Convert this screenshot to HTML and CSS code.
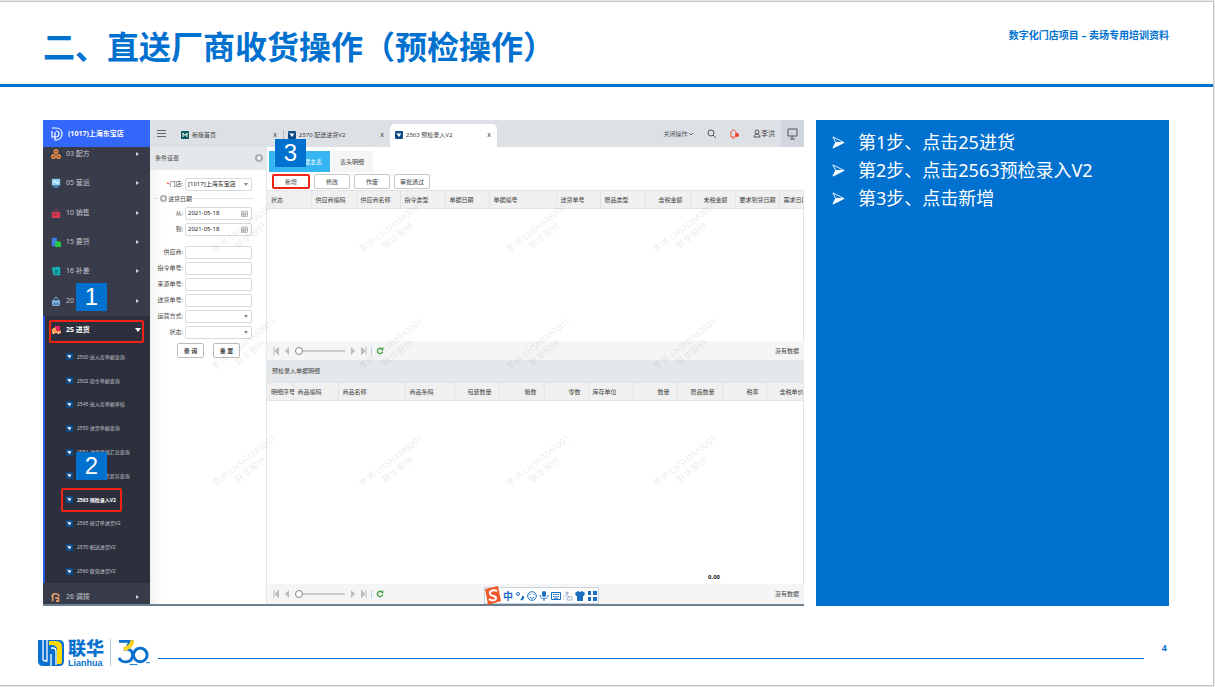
FILE: index.html
```html
<!DOCTYPE html>
<html lang="zh-CN">
<head>
  <meta charset="UTF-8">
  <meta name="viewport" content="width=device-width, initial-scale=1.0">
  <title>直送厂商收货操作</title>
  <link rel="stylesheet" href="styles.css">
</head>
<body>
  <svg class="defs" width="0" height="0">
    <symbol id="doc" viewBox="0 0 16 16"><rect width="16" height="16" rx="2" fill="#0d4a86"/><path d="M2 3l3 2h7l-1 3-3 4-3-4z" fill="#fff"/></symbol>
    <symbol id="cal" viewBox="0 0 12 12"><path d="M1 2h10v9H1zM1 5h10M4 5v6M7 5v6M1 8h10" fill="none" stroke="#888"/></symbol>
    <symbol id="refresh" viewBox="0 0 12 12"><path d="M10 7a4 4 0 1 1-1-4" fill="none" stroke="#3fa045" stroke-width="2"/><path d="M7 5h4V0z" fill="#3fa045"/></symbol>
    <symbol id="up" viewBox="0 0 12 12"><circle cx="6" cy="6" r="6" fill="#a9adb1"/><path d="M6 2l3 4-3 4-3-4z" fill="#fff"/></symbol>
    <symbol id="arrow" viewBox="0 0 14 14"><path d="M1 1l12 6H4z" fill="none" stroke="#fff"/><path d="M4 7h9L1 13z" fill="#fff" stroke="#fff"/></symbol>
  </svg>
  <div class="slide">
    <header class="slide-header">
      <h1>二、直送厂商收货操作（预检操作）</h1>
      <p>数字化门店项目 – 卖场专用培训资料</p>
    </header>

    <main class="content">
      <div class="app">
        <aside class="sidebar">
          <div class="store">
            <svg width="12" height="14" viewBox="0 0 12 14"><path d="M1 1h4c8 0 8 12 0 12H4V5M1 4v6h4c4 0 4-6 0-6" fill="none" stroke="#fff" stroke-width="1.2"/></svg>
            (1017)上海东宝店
          </div>
          <nav class="menu">
            <ul class="menu-main">
              <li><svg viewBox="0 0 12 12"><g fill="none" stroke="#e88b43" stroke-width="2"><circle cx="6" cy="3" r="2"/><circle cx="3" cy="9" r="2"/><circle cx="9" cy="9" r="2"/></g></svg><a href="#">03 配方</a></li>
              <li><svg viewBox="0 0 12 12"><path d="M1 1h10v8H1z" fill="#8bd0f5"/><path d="M2 5h2l1-2 2 4 1-2h2" fill="none" stroke="#fff"/><path d="M5 9h2v2H3h6" stroke="#4b9bd0" fill="none"/></svg><a href="#">05 营运</a></li>
              <li><svg viewBox="0 0 12 12"><path d="M1 5h10v7H1z" fill="#d83a56"/><path d="M3 5l3-3 3 3" fill="none" stroke="#d83a56"/><path d="M3 8h6" stroke="#8c2034" stroke-width="2" stroke-dasharray="1 1"/></svg><a href="#">10 销售</a></li>
              <li><svg viewBox="0 0 12 12"><path d="M1 1h6v10H1z" fill="#3b7de8"/><path d="M5 5h5l2 2v5H5z" fill="#28c840"/></svg><a href="#">15 要货</a></li>
              <li><svg viewBox="0 0 12 12"><path d="M1 2l8-1 2 1v9H3z" fill="#16b8bd"/><path d="M4 5h5M4 7h5M4 9h5" stroke="#0b6870"/></svg><a href="#">16 补差</a></li>
              <li><svg viewBox="0 0 12 12"><path d="M1 5h10v2l-1 5H2L1 7z" fill="#7fb6e6"/><path d="M3 5l3-4 3 4" fill="none" stroke="#7fb6e6"/><path d="M4 8v3M6 8v3M8 8v3" stroke="#31557c"/></svg><a href="#">20 采购</a></li>
              <li class="open"><svg viewBox="0 0 12 12"><path d="M5 1h6v6H5z" fill="#e4205c"/><path d="M1 5l3-2h2v4h6v3H1z" fill="#ff9d57"/><circle cx="3" cy="10" r="1" fill="#fff"/><circle cx="9" cy="10" r="1" fill="#fff"/></svg><a href="#">25 进货</a></li>
            </ul>
            <ul class="submenu">
              <li><svg><use href="#doc"/></svg><a href="#">2500 出入库单据查询</a></li>
              <li><svg><use href="#doc"/></svg><a href="#">2502 指令单据查询</a></li>
              <li><svg><use href="#doc"/></svg><a href="#">2545 出入库单据审核</a></li>
              <li><svg><use href="#doc"/></svg><a href="#">2550 进货单据查询</a></li>
              <li><svg><use href="#doc"/></svg><a href="#">2552 进货单据汇总查询</a></li>
              <li><svg><use href="#doc"/></svg><a href="#">2555 订单到货差异查询</a></li>
              <li class="current"><svg><use href="#doc"/></svg><a href="#">2563 预检录入V2</a></li>
              <li><svg><use href="#doc"/></svg><a href="#">2565 按订单进货V2</a></li>
              <li><svg><use href="#doc"/></svg><a href="#">2570 配送进货V2</a></li>
              <li><svg><use href="#doc"/></svg><a href="#">2560 联营进货V2</a></li>
            </ul>
            <ul class="menu-main menu-last">
              <li><svg viewBox="0 0 12 12"><path d="M1 6c1-5 7-5 9-1M2 4v7M5 7h4v4H6" fill="none" stroke="#e8a060" stroke-width="2"/></svg><a href="#">26 调拨</a></li>
            </ul>
          </nav>
          <span class="badge badge-1">1</span>
          <span class="badge badge-2">2</span>
        </aside>

        <section class="workspace">
          <div class="topbar">
            <button class="burger" type="button" aria-label="菜单"><svg width="9" height="9" viewBox="0 0 9 9"><path d="M0 1h9M0 4h9M0 7h9" stroke="#666" transform="translate(0 .5)"/></svg></button>
            <div class="tab home"><svg viewBox="0 0 16 16"><rect width="16" height="16" rx="2" fill="#0b5a5c"/><path d="M4 12V4l4 5 4-5v8" fill="none" stroke="#fff" stroke-width="2"/></svg><span>新版首页</span><button type="button">x</button></div>
            <div class="tab second"><svg><use href="#doc"/></svg><span>2570 配送进货V2</span><button type="button">x</button></div>
            <div class="tab active"><svg><use href="#doc"/></svg><span>2563 预检录入V2</span><button type="button">x</button></div>
            <div class="tools">
              <span class="close-menu">关闭操作 <svg width="4" height="4" viewBox="0 0 4 4"><path d="M0 1l2 2 2-2" fill="none" stroke="#666"/></svg></span>
              <svg width="9" height="10" viewBox="0 0 9 10"><circle cx="4" cy="4" r="3" fill="none" stroke="#555"/><path d="M6 6l3 3" stroke="#555"/></svg>
              <svg width="9" height="10" viewBox="0 0 9 10"><path d="M1 8V4c0-4 5-4 5 0v4H1M3 8v2" fill="none" stroke="#f0503c"/><circle cx="7" cy="6" r="2" fill="#f0402c"/></svg>
              <span class="user"><svg width="8" height="9" viewBox="0 0 8 9"><circle cx="4" cy="3" r="2" fill="none" stroke="#555"/><path d="M1 8c0-4 6-4 6 0z" fill="none" stroke="#555"/></svg>李洪</span>
              <span class="screen"><svg width="11" height="12" viewBox="0 0 11 12"><path d="M1 1h9v7H1zM5 8v3M3 11h5" fill="none" stroke="#555"/></svg></span>
            </div>
          </div>

          <div class="panes">
            <form class="filter">
              <h2>条件设置 <svg width="8" height="8"><use href="#up"/></svg></h2>
              <div class="field"><label for="store"><i>*</i>门店:</label><span class="drop"><select id="store"><option>[1017]上海东宝店</option></select></span></div>
              <div class="legend"><svg width="7" height="7"><use href="#up"/></svg>进货日期</div>
              <div class="field"><label for="from">从:</label><span class="date"><input id="from" type="text" value="2021-05-18"><svg><use href="#cal"/></svg></span></div>
              <div class="field"><label for="to">到:</label><span class="date"><input id="to" type="text" value="2021-05-18"><svg><use href="#cal"/></svg></span></div>
              <div class="more">
                <div class="field"><label for="vendor">供应商:</label><input id="vendor" type="text"></div>
                <div class="field"><label for="order">指令单号:</label><input id="order" type="text"></div>
                <div class="field"><label for="source">来源单号:</label><input id="source" type="text"></div>
                <div class="field"><label for="delivery">送货单号:</label><input id="delivery" type="text"></div>
                <div class="field"><label for="mode">运营方式:</label><span class="drop"><select id="mode"><option></option></select></span></div>
                <div class="field"><label for="state">状态:</label><span class="drop"><select id="state"><option></option></select></span></div>
              </div>
              <div class="form-buttons"><button type="button">查 询</button><button type="reset">重 置</button></div>
            </form>

            <div class="data">
              <div class="subtabs"><button class="on" type="button">预检录入单据主表</button><button type="button">表头明细</button></div>
              <div class="actions">
                <button class="marked" type="button">新增</button><button type="button">修改</button><button type="button">作废</button><button type="button">审批通过</button>
              </div>
              <div class="grid grid-main">
                <table>
                  <colgroup><col class="c44"><col class="c45"><col class="c44"><col class="c45"><col class="c44"><col class="c67"><col class="c44"><col class="c45"><col class="c45"><col class="c45"><col class="c44"><col class="c45"></colgroup>
                  <thead><tr><th>状态</th><th>供应商编码</th><th>供应商名称</th><th>指令类型</th><th>单据日期</th><th>单据编号</th><th>送货单号</th><th>赠品类型</th><th class="num">含税金额</th><th class="num">未税金额</th><th>要求到货日期</th><th>需求日期</th></tr></thead>
                </table>
              </div>
              <div class="pager">
                <button type="button" aria-label="首页"><svg viewBox="0 0 6 8"><path d="M1 0v8M6 0v8L2 4z" fill="#bbb" stroke="#bbb"/></svg></button>
                <button type="button" aria-label="上一页"><svg viewBox="0 0 6 8"><path d="M5 0v8L1 4z" fill="#bbb"/></svg></button>
                <input type="range" min="0" max="10" value="0" aria-label="页码">
                <button type="button" aria-label="下一页"><svg viewBox="0 0 6 8"><path d="M1 0v8l4-4z" fill="#bbb"/></svg></button>
                <button type="button" aria-label="末页"><svg viewBox="0 0 6 8"><path d="M5 0v8M0 0v8l4-4z" fill="#bbb" stroke="#bbb"/></svg></button>
                <button class="reload" type="button" aria-label="刷新"><svg><use href="#refresh"/></svg></button>
                <span>没有数据</span>
              </div>
              <h2>预检录入单据明细</h2>
              <div class="grid grid-detail">
                <table>
                  <colgroup><col class="c26"><col class="c45"><col class="c67"><col class="c49"><col class="c45"><col class="c45"><col class="c44"><col class="c45"><col class="c44"><col class="c45"><col class="c44"><col class="c39"></colgroup>
                  <thead><tr><th>明细序号</th><th>商品编码</th><th>商品名称</th><th>商品条码</th><th class="num">包装数量</th><th class="num">箱数</th><th class="num">零数</th><th>库存单位</th><th class="num">数量</th><th class="num">赠品数量</th><th class="num">税率</th><th class="num last">含税单价</th></tr></thead>
                </table>
                <p class="sum">0.00</p>
              </div>
              <div class="pager">
                <button type="button" aria-label="首页"><svg viewBox="0 0 6 8"><path d="M1 0v8M6 0v8L2 4z" fill="#bbb" stroke="#bbb"/></svg></button>
                <button type="button" aria-label="上一页"><svg viewBox="0 0 6 8"><path d="M5 0v8L1 4z" fill="#bbb"/></svg></button>
                <input type="range" min="0" max="10" value="0" aria-label="页码">
                <button type="button" aria-label="下一页"><svg viewBox="0 0 6 8"><path d="M1 0v8l4-4z" fill="#bbb"/></svg></button>
                <button type="button" aria-label="末页"><svg viewBox="0 0 6 8"><path d="M5 0v8M0 0v8l4-4z" fill="#bbb" stroke="#bbb"/></svg></button>
                <button class="reload" type="button" aria-label="刷新"><svg><use href="#refresh"/></svg></button>
                <span>没有数据</span>
              </div>
              <span class="badge badge-3">3</span>
              <!-- input method bar -->
              <div class="ime">
                <svg class="ime-logo" width="16" height="19" viewBox="0 0 16 19"><path d="M0 3l13-3 3 15-13 4z" fill="#f0592b"/><path d="M12 5C8 3 4 5 5 8s6 1 6 4-5 3-7 1" fill="none" stroke="#fff" stroke-width="2"/></svg>
                <b>中</b>
                <svg viewBox="0 0 10 10"><circle cx="3" cy="3" r="1.5" fill="none" stroke="#1b6fc0"/><path d="M8 5v2l-2 2" fill="none" stroke="#1b6fc0" stroke-width="2"/></svg>
                <svg viewBox="0 0 10 10"><circle cx="5" cy="5" r="4.3" fill="none" stroke="#1b6fc0"/><path d="M3 3v1M7 3v1M3 6q2 3 4 0" fill="none" stroke="#1b6fc0"/></svg>
                <svg viewBox="0 0 10 10"><rect x="3" width="4" height="6" rx="2" fill="#1b6fc0"/><path d="M1 4c0 5 8 5 8 0M5 7v3" fill="none" stroke="#1b6fc0"/></svg>
                <svg viewBox="0 0 10 10"><path d="M.5 1.5h9v7h-9z" fill="none" stroke="#1b6fc0"/><path d="M2 3.5h6M2 5.5h6" stroke="#1b6fc0" stroke-dasharray="1.5 .7"/><path d="M3 7.2h4" stroke="#1b6fc0"/></svg>
                <svg viewBox="0 0 10 10"><circle cx="4" cy="2" r="1.5" fill="#a8b4c6"/><path d="M0 9c0-6 6-6 6-2M4 6h5v3H4z" fill="none" stroke="#a8b4c6"/></svg>
                <svg viewBox="0 0 10 10"><path d="M3 0l2 1 2-1 3 2-1 3H8v5H2V5H1L0 2z" fill="#1b6fc0"/></svg>
                <svg viewBox="0 0 10 10"><path d="M1 0h3v4H1zM6 0h4v4H6zM1 6h3v4H1zM6 6h4v4H6z" fill="#1b6fc0"/></svg>
              </div>
            </div>
          </div>
          <div class="watermarks" aria-hidden="true">
            <span>李洪-LHSHXM0001<br>联华股份</span><span>李洪-LHSHXM0001<br>联华股份</span><span>李洪-LHSHXM0001<br>联华股份</span><span>李洪-LHSHXM0001<br>联华股份</span>
            <span>李洪-LHSHXM0001<br>联华股份</span><span>李洪-LHSHXM0001<br>联华股份</span><span>李洪-LHSHXM0001<br>联华股份</span><span>李洪-LHSHXM0001<br>联华股份</span>
            <span>李洪-LHSHXM0001<br>联华股份</span><span>李洪-LHSHXM0001<br>联华股份</span><span>李洪-LHSHXM0001<br>联华股份</span><span>李洪-LHSHXM0001<br>联华股份</span>
          </div>
        </section>
      </div>

      <ul class="steps">
        <li><svg><use href="#arrow"/></svg>第1步、点击25进货</li>
        <li><svg><use href="#arrow"/></svg>第2步、点击2563预检录入V2</li>
        <li><svg><use href="#arrow"/></svg>第3步、点击新增</li>
      </ul>
    </main>

    <footer class="slide-footer">
      <svg class="mark" width="26" height="27" viewBox="0 0 26 27"><path d="M0 1h21q5 0 5 5v16q0 5-5 5H5q-5 0-5-5z" fill="#0871d0"/><path d="M11 2h7q6 0 6 6v15q0 2-3 2h-2V10q0-3-4-4h-4z" fill="#ffd900"/><path d="M5 1v19q0 2 3 2h1V1M18 26V12q0-3-3-3h-2M13 27V15" fill="none" stroke="#fff" stroke-width="1.3"/></svg>
      <div class="brand"><strong>联华</strong><span>Lianhua</span></div>
      <svg class="thirty" width="33" height="27" viewBox="0 0 33 27"><path d="M1 2h12l-5 8q7 0 7 6c0 9-12 9-14 3" fill="none" stroke="#0871d0" stroke-width="3"/><path d="M6 10q8-2 9-9" fill="none" stroke="#ffd21c" stroke-width="4"/><circle cx="23" cy="16" r="7" fill="none" stroke="#0871d0" stroke-width="3"/><path d="M12 26h8M29 24h4" stroke="#0871d0"/></svg>
      <div class="rule"></div>
      <span class="page">4</span>
    </footer>
  </div>
</body>
</html>
```
FILE: styles.css
```css
* {
  box-sizing: border-box;
}
body {
  margin: 0;
  padding: 1px 1px 1px 0;
  min-height: 100vh;
  display: flex;
  background: #e8e8e8;
  font-family: "Noto Sans", "Noto Sans CJK SC", sans-serif;
}
h1, h2, p, ul {
  margin: 0;
  padding: 0;
}
ul {
  list-style: none;
}
a {
  color: inherit;
  text-decoration: none;
}
button, input, select {
  font: inherit;
  color: inherit;
  margin: 0;
  padding: 0;
}
svg {
  flex: none;
}
.defs {
  position: absolute;
}
.slide {
  flex: 1;
  display: flex;
  flex-direction: column;
  background: #fff;
  border: 1px solid #c4c4c4;
  border-left: 0;
}

/* header */
.slide-header {
  display: flex;
  justify-content: space-between;
  height: 85px;
  padding: 20px 44px 0 43px;
  border-bottom: 3px solid #0071cf;
  color: #0071cf;
}
.slide-header h1 {
  font: bold 32px/46px "Noto Sans CJK SC", sans-serif;
}
.slide-header p {
  font-size: 10px;
  font-weight: bold;
  line-height: 26px;
}

.content {
  display: grid;
  grid-template-columns: 761fr 353fr;
  gap: 12px;
  padding: 33px 44px 0 43px;
}

/* application window */
.app {
  display: flex;
  min-width: 0;
  height: 486px;
  border-bottom: 2px solid #6b7f8e;
  font-size: 6px;
  line-height: 10px;
  color: #444;
}
.sidebar {
  position: relative;
  width: 107px;
  flex: none;
  display: flex;
  flex-direction: column;
  background: #383c4a;
  color: #c3c6cd;
}
.store {
  display: flex;
  align-items: center;
  gap: 5px;
  height: 27px;
  flex: none;
  padding-left: 8px;
  background: #3366fb;
  color: #fff;
  font-size: 7px;
  font-weight: bold;
}
.menu {
  flex: 1;
  overflow: hidden;
  display: flex;
  flex-direction: column;
}
.menu-main {
  height: 206px;
  flex: none;
  margin-top: -8px;
  display: flex;
  flex-direction: column;
  font-size: 7px;
}
.menu-main li {
  flex: 1;
  display: flex;
  align-items: center;
  gap: 5px;
  padding: 0 11px 0 8px;
}
.menu-main svg {
  width: 10px;
  height: 10px;
}
.menu-main li::after {
  content: "";
  margin-left: auto;
  border: 2px solid transparent;
  border-left: 3px solid #d0d3da;
  border-right: 0;
}
.menu-main .open {
  position: relative;
  background: #2c303d;
  box-shadow: inset 2px 0 #2457e8;
  color: #fff;
  font-weight: bold;
  padding-right: 9px;
}
.menu-main .open::after {
  border: 3px solid transparent;
  border-top: 4px solid #fff;
  border-bottom: 0;
}
.menu-main .open::before {
  content: "";
  position: absolute;
  inset: 4px 6px 2px 6px;
  border: 2px solid #f02314;
  border-radius: 2px;
}
.menu-main.menu-last {
  height: 28px;
  margin-top: 0;
}
.submenu {
  height: 238px;
  flex: none;
  display: flex;
  flex-direction: column;
  background: #2c303d;
  border-left: 2px solid #2457e8;
  font-size: 5px;
  white-space: nowrap;
}
.submenu li {
  flex: 1;
  display: flex;
  align-items: center;
  gap: 4px;
  padding-left: 21px;
}
.submenu svg {
  width: 7px;
  height: 7px;
}
.submenu .current {
  position: relative;
  color: #fff;
  font-weight: bold;
}
.submenu .current::before {
  content: "";
  position: absolute;
  inset: 0 28px 0 16px;
  border: 2px solid #f02314;
  border-radius: 2px;
}
.badge {
  position: absolute;
  width: 31px;
  height: 28px;
  background: #0071cf;
  color: #fff;
  font: 24px/28px "Liberation Sans", sans-serif;
  text-align: center;
}
.badge-1 {
  left: 33px;
  top: 163px;
}
.badge-2 {
  left: 33px;
  top: 332px;
}
.badge-3 {
  left: 8px;
  top: -8px;
}

/* top bar */
.workspace {
  position: relative;
  flex: 1;
  min-width: 0;
  display: flex;
  flex-direction: column;
}
.topbar {
  display: flex;
  height: 27px;
  flex: none;
  background: #dde1e6;
}
.burger {
  width: 24px;
  border: 0;
  background: none;
}
.burger svg {
  display: block;
  margin-left: 7px;
}
.tab {
  display: flex;
  align-items: center;
  gap: 3px;
  width: 107px;
  padding: 2px 6px 0 5px;
  white-space: nowrap;
}
.tab svg {
  width: 8px;
  height: 8px;
}
.tab button {
  margin-left: auto;
  border: 0;
  background: none;
  font-size: 7px;
}
.home {
  width: 109px;
  padding-left: 7px;
}
.second {
  position: relative;
}
.second::before {
  content: "";
  position: absolute;
  left: 0;
  top: 10px;
  height: 10px;
  border-left: 1px solid #b4b8be;
}
.active {
  margin-top: 4px;
  padding-top: 0;
  padding-bottom: 2px;
  background: #fff;
  border-radius: 5px 5px 0 0;
}
.tools {
  flex: 1;
  display: flex;
  align-items: center;
  justify-content: flex-end;
  gap: 14px;
  white-space: nowrap;
}
.close-menu {
  color: #555;
}
.user {
  display: flex;
  align-items: center;
  font-size: 7px;
}
.screen {
  display: flex;
  align-items: center;
  justify-content: center;
  width: 23px;
  height: 27px;
  margin-left: -8px;
  background: #d0d5df;
}

.panes {
  flex: 1;
  display: flex;
  min-height: 0;
}

/* filter form */
.filter {
  width: 117px;
  flex: none;
  border-right: 1px solid #e4e6e8;
  background: linear-gradient(to right, #f3f3f4, #fff 12px);
}
.filter h2 {
  display: flex;
  align-items: center;
  justify-content: space-between;
  height: 23px;
  margin-bottom: 6px;
  padding: 0 3px 2px 5px;
  background: #e4e8ea;
  font-size: 6px;
  font-weight: normal;
}
.field {
  display: grid;
  grid-template-columns: 33px 67px;
  gap: 2px;
  align-items: center;
  height: 16px;
}
.field label {
  text-align: right;
  white-space: nowrap;
}
.field i {
  color: #e22;
}
.field input, .field select {
  display: block;
  width: 100%;
  height: 13px;
  padding: 0 2px;
  border: 1px solid #d8dadc;
  border-radius: 2px;
  background: #fff;
  appearance: none;
  color: #222;
}
.drop, .date {
  position: relative;
}
.drop::after {
  content: "";
  position: absolute;
  right: 4px;
  top: 5px;
  border: 2px solid transparent;
  border-top: 3px solid #888;
  border-bottom: 0;
}
.date svg {
  position: absolute;
  right: 4px;
  top: 3px;
  width: 7px;
  height: 7px;
}
.legend {
  display: flex;
  align-items: center;
  gap: 1px;
  height: 13px;
  padding: 0 12px 0 4px;
}
.legend::before {
  content: "";
  width: 5px;
  border-top: 1px solid #e4e4e4;
}
.legend::after {
  content: "";
  flex: 1;
  border-top: 1px solid #e4e4e4;
}
.more {
  margin-top: 7px;
}
.form-buttons {
  display: flex;
  gap: 9px;
  margin: 3px 0 0 27px;
}
.form-buttons button {
  width: 27px;
  height: 15px;
  border: 1px solid #bbb;
  border-radius: 2px;
  background: #fff;
  font-weight: bold;
  line-height: 10px;
}

/* data area */
.data {
  position: relative;
  flex: 1;
  min-width: 0;
  display: flex;
  flex-direction: column;
}
.subtabs {
  display: flex;
  gap: 1px;
  height: 25px;
  flex: none;
  padding: 4px 2px 0;
}
.subtabs button {
  width: 42px;
  border: 0;
  background: #f5f5f5;
}
.subtabs .on {
  width: 61px;
  background: #35b5f1;
  color: #fff;
  text-align: right;
  padding-right: 8px;
}
.actions {
  display: flex;
  gap: 4px;
  height: 18px;
  flex: none;
  padding: 2px 5px 0;
}
.actions button {
  width: 36px;
  height: 15px;
  border: 1px solid #c8c8c8;
  border-radius: 2px;
  background: #fff;
}
.actions .marked {
  width: 38px;
  border: 2px solid #ee2418;
}
.grid {
  overflow: hidden;
  border-right: 1px solid #e4e4e4;
}
.grid-main {
  height: 151px;
  flex: none;
}
.grid-detail {
  flex: 1;
  display: flex;
  flex-direction: column;
  justify-content: space-between;
}
table {
  width: 537px;
  table-layout: fixed;
  border-collapse: collapse;
  background: #f0f0f0;
}
th {
  height: 18px;
  padding: 0 0 0 4px;
  border: 1px solid #e2e4e5;
  border-left: 0;
  text-align: left;
  font-weight: normal;
  white-space: nowrap;
}
.num {
  text-align: right;
  padding-right: 7px;
}
.last {
  padding-right: 1px;
}
.c26 { width: 26px; }
.c39 { width: 39px; }
.c44 { width: 44px; }
.c45 { width: 45px; }
.c49 { width: 49px; }
.c67 { width: 67px; }
.sum {
  padding: 0 83px 2px 0;
  text-align: right;
  font-weight: bold;
  color: #222;
}
.data h2 {
  height: 22px;
  flex: none;
  padding-left: 5px;
  background: #e4e8eb;
  font-size: 6px;
  font-weight: normal;
  line-height: 22px;
}
.pager {
  display: flex;
  align-items: center;
  gap: 5px;
  height: 19px;
  flex: none;
  padding: 0 5px 0 6px;
  background: #f5f5f5;
}
.grid-detail + .pager {
  height: 20px;
}
.pager button {
  width: 6px;
  height: 8px;
  border: 0;
  background: none;
}
.pager svg {
  display: block;
  width: 6px;
  height: 8px;
}
.pager .reload {
  width: 13px;
  margin-left: -1px;
  padding-left: 4px;
  border-left: 1px solid #b8d4ee;
}
.pager .reload svg {
  width: 8px;
}
.pager input {
  width: 50px;
  height: 8px;
  appearance: none;
  background: linear-gradient(#ccc, #ccc) center / 100% 2px no-repeat;
}
.pager input::-webkit-slider-thumb {
  appearance: none;
  width: 8px;
  height: 8px;
  border: 1px solid #888;
  border-radius: 50%;
  background: #fff;
}
.pager span {
  margin-left: auto;
}
.ime {
  position: absolute;
  left: 217px;
  bottom: 0;
  display: flex;
  align-items: center;
  gap: 2px;
  height: 17px;
  padding-right: 1px;
  border: 1px solid #c8d4e2;
  background: #fff;
  color: #1b6fc0;
}
.ime b {
  font-size: 10px;
}
.ime svg {
  width: 10px;
  height: 10px;
}
.ime .ime-logo {
  width: 16px;
  height: 19px;
}

/* watermark layer */
.watermarks {
  position: absolute;
  inset: 80px 0 auto 52px;
  display: grid;
  grid-template-columns: repeat(4, 147px);
  grid-auto-rows: 117px;
  pointer-events: none;
  color: rgba(0, 0, 0, 0.1);
  font-size: 9px;
  line-height: 11px;
  text-align: center;
}
.watermarks span {
  width: 90px;
  height: 22px;
  margin-top: 20px;
  transform: rotate(-38deg);
}

.steps {
  padding: 8px 16px;
  background: #0071cf;
  color: #fff;
  font-size: 18px;
  line-height: 28px;
}
.steps li {
  display: flex;
  align-items: center;
  gap: 13px;
}
.steps svg {
  width: 13px;
  height: 13px;
}

/* footer */
.slide-footer {
  display: flex;
  margin-top: auto;
  padding: 0 46px 17px 38px;
  height: 62px;
  color: #0871d0;
}
.slide-footer svg {
  margin-top: 16px;
}
.brand {
  display: flex;
  flex-direction: column;
  gap: 2px;
  width: 36px;
  margin: 15px 6px 0 4px;
}
.brand strong {
  font: 900 18px/18px "Noto Sans CJK SC", sans-serif;
}
.brand span {
  font: bold 9px/10px "Liberation Sans", sans-serif;
}
.slide-footer .thirty {
  width: 40px;
  padding-left: 7px;
  border-left: 1px solid #a8cdee;
}
.rule {
  flex: 1;
  height: 1px;
  margin: 35px 18px 0 8px;
  background: #0871d0;
}
.page {
  margin-top: 18px;
  font-size: 9px;
  font-weight: bold;
  line-height: 14px;
}
```
